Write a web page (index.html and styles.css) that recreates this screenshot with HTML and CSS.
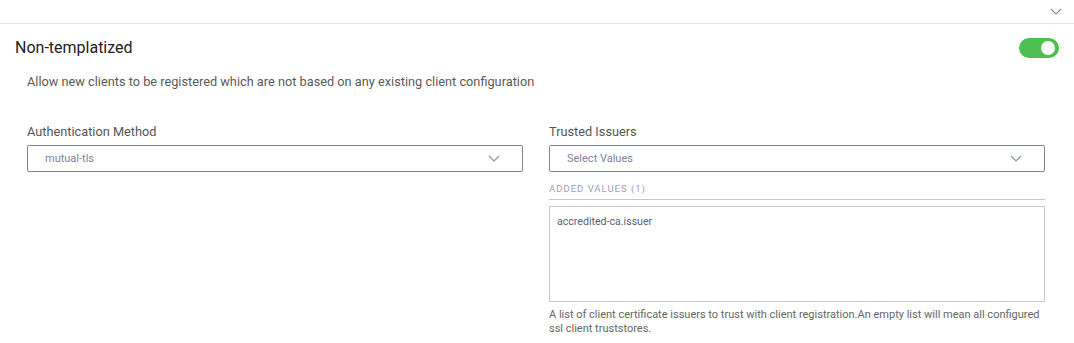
FILE: index.html
```html
<!DOCTYPE html>
<html>
<head>
<meta charset="utf-8">
<link rel="stylesheet" href="styles.css">
</head>
<body>
<div class="topbar">
  <svg class="chev-top" width="12" height="7" viewBox="0 0 12 7"><path d="M1 1 L6 6 L11 1" fill="none" stroke="#8a8fa6" stroke-width="1.1"/></svg>
</div>
<div class="section">
  <div class="title-row">
    <div class="title">Non-templatized</div>
    <div class="toggle"><div class="knob"></div></div>
  </div>
  <div class="desc">Allow new clients to be registered which are not based on any existing client configuration</div>
  <div class="grid">
    <div class="field">
      <div class="label">Authentication Method</div>
      <div class="select">
        <span class="value">mutual-tls</span>
        <svg width="12" height="7" viewBox="0 0 12 7"><path d="M1 1 L6 6 L11 1" fill="none" stroke="#8a8fa6" stroke-width="1.1"/></svg>
      </div>
    </div>
    <div class="field">
      <div class="label">Trusted Issuers</div>
      <div class="select">
        <span class="value">Select Values</span>
        <svg width="12" height="7" viewBox="0 0 12 7"><path d="M1 1 L6 6 L11 1" fill="none" stroke="#8a8fa6" stroke-width="1.1"/></svg>
      </div>
      <div class="added">ADDED VALUES (1)</div>
      <div class="values">accredited-ca.issuer</div>
      <div class="help">A list of client certificate issuers to trust with client registration.An empty list will mean all configured ssl client truststores.</div>
    </div>
  </div>
</div>
</body>
</html>
```

FILE: styles.css
```css
* { box-sizing: border-box; }
body {
  margin: 0;
  font-family: Roboto, "Liberation Sans", sans-serif;
  background: #fff;
  color: #333;
}
.topbar {
  height: 24px;
  border-bottom: 1px solid #e6e6e6;
  display: flex;
  justify-content: flex-end;
  align-items: flex-start;
  padding-right: 12px;
  padding-top: 8px;
}
.section {
  padding: 0 15px 0 15px;
}
.title-row {
  display: flex;
  justify-content: space-between;
  align-items: center;
  height: 46px;
}
.title {
  font-size: 16px;
  color: #222;
}
.toggle {
  width: 40px;
  height: 20px;
  border-radius: 10px;
  background: #4cbf50;
  position: relative;
  margin-top: 1px;
}
.knob {
  position: absolute;
  right: 4px;
  top: 3px;
  width: 14px;
  height: 14px;
  border-radius: 50%;
  background: #fff;
}
.desc {
  padding-left: 12px;
  font-size: 12.75px;
  color: #5a5a5a;
  line-height: 16px;
  margin-top: 4px;
}
.grid {
  display: grid;
  grid-template-columns: 496px 496px;
  column-gap: 26px;
  padding-left: 12px;
  margin-top: 34px;
}
.label {
  font-size: 12.75px;
  color: #555;
  line-height: 16px;
  margin-bottom: 5px;
}
.select {
  height: 27px;
  border: 1px solid #7e839c;
  border-radius: 2px;
  display: flex;
  align-items: center;
  justify-content: space-between;
  padding: 0 22px 0 17px;
}
.select .value {
  font-size: 11px;
  color: #7d829a;
}
.added {
  margin-top: 11px;
  font-size: 9.5px;
  letter-spacing: 1px;
  color: #9a9fb2;
  line-height: 12px;
  padding-bottom: 4px;
  border-bottom: 1px solid #c8c8c8;
}
.values {
  margin-top: 6px;
  height: 96px;
  border: 1px solid #c8c8c8;
  padding: 8px 7px;
  font-size: 10.6px;
  color: #5c6178;
  line-height: 14px;
}
.help {
  margin-top: 6px;
  font-size: 11px;
  color: #666;
  line-height: 14px;
}
```
